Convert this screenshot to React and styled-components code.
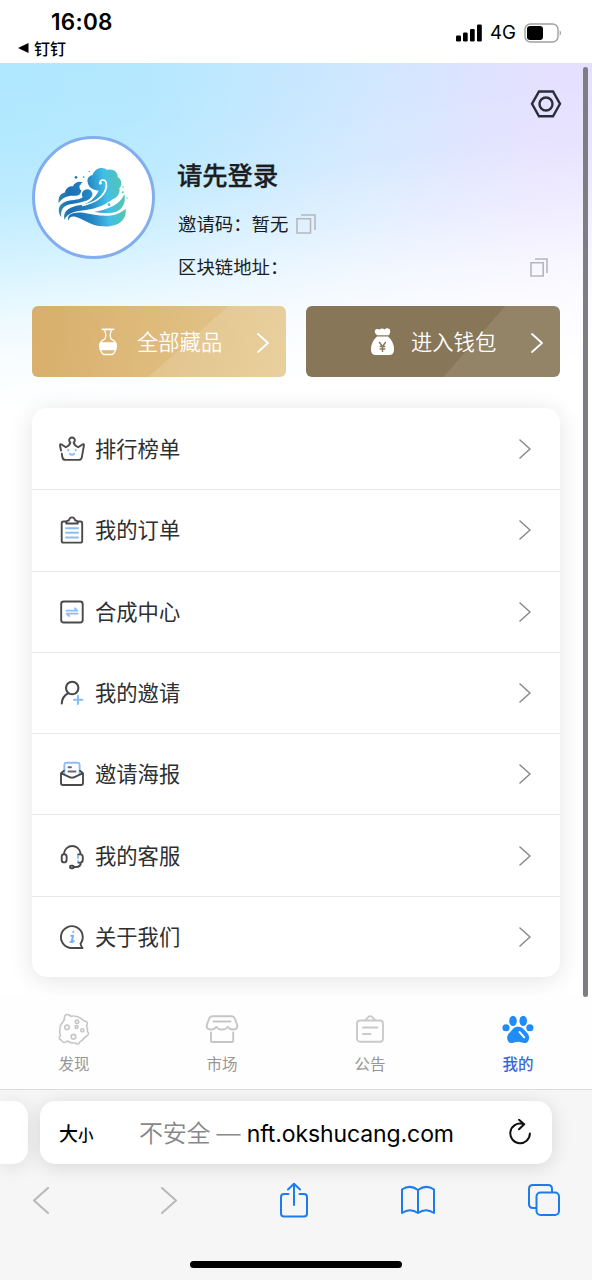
import styled, { createGlobalStyle } from "styled-components";

const GlobalStyle = createGlobalStyle`
  * {
    box-sizing: border-box;
  }
  body {
    margin: 0;
    background: #fff;
    font-family: Inter, "Noto Sans CJK SC", sans-serif;
  }
  svg {
    display: block;
    flex: none;
  }
`;

const Screen = styled.div`
  position: relative;
  display: flex;
  flex-direction: column;
  width: 592px;
  height: 1280px;
  overflow: hidden;
`;

const StatusBar = styled.header`
  display: flex;
  justify-content: space-between;
  height: 63px;
  padding: 9px 30px 0 18px;
`;
const Clock = styled.div`
  padding-left: 33px;
  font-size: 22.5px;
  font-weight: 600;
  line-height: 26px;
  letter-spacing: 0.3px;
`;
const BackTo = styled.div`
  display: flex;
  align-items: center;
  gap: 5px;
  height: 25px;
  font-size: 16px;
  font-weight: 500;
`;
const Signals = styled.div`
  display: flex;
  align-items: center;
  gap: 8px;
  height: 47px;
  font-size: 18.7px;
`;

const Page = styled.main`
  height: 932px;
  padding: 24px 32px 0;
  background: linear-gradient(
      175deg,
      rgba(255, 255, 255, 0) 0,
      rgba(255, 255, 255, 0.03) 70px,
      rgba(255, 255, 255, 0.14) 130px,
      rgba(255, 255, 255, 0.42) 190px,
      rgba(255, 255, 255, 0.72) 245px,
      rgba(255, 255, 255, 0.9) 290px,
      #fff 350px
    ),
    linear-gradient(95deg, #b0e8ff 0, #b4e8ff 150px, #d0e7ff 370px, #e4dfff 540px);
`;
const Settings = styled.div`
  display: flex;
  justify-content: flex-end;
  height: 49px;
  padding: 1px 0 0;
  margin-right: -2px;
`;
const Profile = styled.section`
  display: flex;
  height: 170px;
`;
const Avatar = styled.div`
  display: flex;
  align-items: center;
  justify-content: center;
  width: 123px;
  height: 123px;
  border: 3px solid #82aef0;
  border-radius: 50%;
  background: #fff;
`;
const Info = styled.div`
  flex: 1;
  padding: 20px 12px 0 22px;
  color: #1b1d20;
`;
const Name = styled.h1`
  margin: 0;
  font-size: 25.3px;
  font-weight: 500;
  line-height: 40px;
  -webkit-text-stroke: 0.3px;
`;
const InfoLine = styled.div`
  display: flex;
  align-items: center;
  justify-content: ${props => (props.$spread ? "space-between" : "flex-start")};
  gap: 8px;
  height: 43px;
  margin-top: ${props => (props.$spread ? 0 : "5px")};
  padding-left: 1px;
  font-size: 18.4px;
  svg {
    margin-top: ${props => (props.$spread ? "4px" : "2px")};
  }
`;

const Actions = styled.section`
  display: flex;
  gap: 20px;
  margin-bottom: 31px;
`;
const Action = styled.button`
  display: flex;
  align-items: center;
  width: 254px;
  height: 71px;
  padding: 0 17px 0 62px;
  border: 0;
  border-radius: 6px;
  background: ${props => props.$fill};
  color: #fff;
  font-family: inherit;
  font-size: 21.3px;
  font-weight: 350;
  svg:last-child {
    margin-top: 2px;
  }
`;
const ActionLabel = styled.span`
  flex: 1;
  margin-left: 15px;
  padding-bottom: 3px;
  text-align: left;
`;

const Menu = styled.ul`
  margin: 0;
  padding: 0;
  border-radius: 15px;
  background: #fff;
  box-shadow: 0 3px 24px rgba(0, 0, 0, 0.11);
  list-style: none;
`;
const MenuItem = styled.li`
  display: flex;
  align-items: center;
  height: 81.3px;
  padding: 0 29px 0 25px;
  color: #2d2f32;
  font-size: 21.3px;
  & + & {
    border-top: 1px solid #e9e9e9;
  }
`;
const MenuLabel = styled.span`
  flex: 1;
  margin-left: 8px;
  padding-bottom: 3px;
`;

const TabBar = styled.nav`
  position: relative;
  display: flex;
  height: 95px;
  border-bottom: 1px solid #dcdcdc;
  background: #fefefe;
`;
const Tab = styled.a`
  display: flex;
  flex: 1;
  flex-direction: column;
  align-items: center;
  padding-top: 17px;
  color: ${props => (props.$active ? "#3a66dc" : "#979797")};
  font-size: 15.5px;
  font-weight: ${props => (props.$active ? 500 : 400)};
  line-height: 24px;
  svg {
    margin-bottom: 7px;
  }
`;

const Browser = styled.footer`
  height: 190px;
  background: #f6f6f6;
  overflow: hidden;
`;
const Pills = styled.div`
  display: flex;
  gap: 12px;
  padding-top: 11px;
`;
const PrevPill = styled.div`
  width: 28px;
  height: 63px;
  border-radius: 0 15px 15px 0;
  background: #fff;
  box-shadow: 0 3px 20px rgba(0, 0, 0, 0.1);
`;
const Address = styled.div`
  display: flex;
  align-items: center;
  width: 512px;
  height: 63px;
  padding: 0 20px 0 19px;
  border-radius: 15px;
  background: #fff;
  box-shadow: 0 3px 20px rgba(0, 0, 0, 0.13);
`;
const TextSize = styled.div`
  width: 80px;
  font-size: 19px;
  font-weight: 500;
  small {
    font-size: 15.5px;
  }
`;
const Url = styled.div`
  flex: 1;
  padding-bottom: 2px;
  font-size: 23px;
  white-space: nowrap;
  letter-spacing: -0.1px;
`;
const Insecure = styled.span`
  color: #88888b;
  font-size: 24px;
  font-weight: 350;
  letter-spacing: -0.3px;
`;
const Toolbar = styled.div`
  display: grid;
  grid-template-columns: 128px 124px 124px 126px;
  align-items: center;
  justify-items: start;
  height: 72px;
  padding-left: 33px;
  grid-template-columns: 128px 118px 121px 127px 34px;
`;
const HomeIndicator = styled.div`
  width: 212px;
  height: 7px;
  margin: 25px auto 0;
  border-radius: 4px;
  background: #000;
`;
const Scrollbar = styled.div`
  position: absolute;
  top: 67px;
  right: 4px;
  width: 5px;
  height: 930px;
  border-radius: 3px;
  background: #7d7d83;
`;

function Icon({ w = 26, h = 28, color = "#4a4a4c", stroke = 1.9, children }) {
  return (
    <svg
      width={w}
      height={h}
      viewBox={`0 0 ${w} ${h}`}
      fill="none"
      stroke={color}
      strokeWidth={stroke}
      strokeLinecap="round"
      strokeLinejoin="round"
    >
      {children}
    </svg>
  );
}

const BLUE = "#8fbcf5";

function Chevron({ w = 12, h = 20, color = "#8c8c8c", stroke = 1.6, left }) {
  return (
    <Icon w={w} h={h} color={color} stroke={stroke}>
      <path
        d={
          left
            ? `M${w - 1} 1L1 ${h / 2}L${w - 1} ${h - 1}`
            : `M1 1L${w - 1} ${h / 2}L1 ${h - 1}`
        }
      />
    </Icon>
  );
}

function Copy({ w = 20, h = 20, split = 14.5 }) {
  return (
    <svg
      width={w}
      height={h}
      viewBox={`0 0 ${w} ${h}`}
      fill="none"
      stroke="#b4b8bd"
      strokeWidth="1.6"
    >
      <path d={`M1 4.8H${split}V${h - 1}H1z`} />
      <path d={`M5 1H${w - 1}V${h - 4}`} />
    </svg>
  );
}

function Logo() {
  return (
    <svg width="75" height="64" viewBox="108 118 225 192">
      <defs>
        <linearGradient
          id="sea"
          gradientUnits="userSpaceOnUse"
          x1="116"
          y1="230"
          x2="322"
          y2="205"
        >
          <stop offset="0" stopColor="#2b8aa8" />
          <stop offset="0.16" stopColor="#1b6fb5" />
          <stop offset="0.45" stopColor="#2386c4" />
          <stop offset="0.7" stopColor="#42bfe6" />
          <stop offset="1" stopColor="#58c6a4" />
        </linearGradient>
      </defs>
      <g fill="url(#sea)">
        <path d="M116 229C114 209 122 200 134 198C138 184 148 177 159 179C164 167 176 163 189 167C177 172 175 184 184 192C181 205 174 209 158 207C140 207 127 214 116 229z" />
        <path d="M124 272C111 253 114 233 136 225C153 218 171 223 188 212C182 199 190 188 202 188C215 189 221 201 215 210C204 226 177 227 150 233C128 239 121 250 124 272z" />
        <path d="M206 176C198 161 203 147 218 145C222 125 248 117 262 130C280 125 294 137 293 151C308 160 306 177 298 185C302 200 290 215 278 218C260 233 230 246 198 250C165 254 142 258 134 279C126 256 148 240 178 236C208 232 226 213 236 192C224 191 211 186 206 176z" />
        <path d="M222 256C263 249 300 235 313 203C319 228 308 247 289 255C270 262 243 258 222 256z" />
        <path d="M146 283C138 263 159 255 190 258C231 265 282 279 317 246C321 283 292 301 250 299C209 297 190 276 166 270C152 268 146 274 146 283z" />
        <circle cx="168" cy="152" r="4" />
        <circle cx="191" cy="151" r="2.5" />
        <circle cx="208" cy="134" r="2" />
        <circle cx="181" cy="172" r="2" />
        <circle cx="309" cy="181" r="2.5" />
        <circle cx="308" cy="197" r="3" />
        <circle cx="321" cy="214" r="2" />
      </g>
      <path
        d="M241 170C237 158 257 155 259 171C262 190 247 209 232 219C217 229 202 233 188 236"
        fill="none"
        stroke="#fff"
        strokeWidth="5"
        strokeLinecap="round"
      />
      <circle cx="241" cy="169" r="4.5" fill="#fff" />
      <g fill="#fff">
        <circle cx="266" cy="234" r="7" />
        <circle cx="283" cy="221" r="5" />
        <circle cx="298" cy="214" r="4" />
      </g>
      <circle cx="267" cy="234" r="4" fill="#42bfe6" />
    </svg>
  );
}

const menu = [
  {
    label: "排行榜单",
    icon: (
      <Icon w={30}>
        <path d="M4 15.5L3 10.2Q3 8.8 4.3 9.3L8.8 12.2Q12.6 10.8 13.4 7.6A2.8 2.8 0 1 1 16.6 7.6Q17.4 10.8 21.2 12.2L25.8 9.3Q27 8.8 27 10.2L24.8 22.3Q24.3 24.9 21.7 24.9H8.3Q5.9 24.9 5.4 22.3L4.8 18.8" />
        <path
          d="M11.3 14.6V15.4M18.7 14.6V15.4M12.7 18.7Q15 20.8 17.3 18.7"
          stroke={BLUE}
        />
      </Icon>
    )
  },
  {
    label: "我的订单",
    icon: (
      <Icon w={30}>
        <path d="M9 5.5H6.5Q4.7 5.5 4.7 7.3V25Q4.7 26.6 6.5 26.6H23.5Q25.2 26.6 25.2 25V7.3Q25.2 5.5 23.5 5.5H21M9.3 7.5V6.2Q9.5 4.7 12 4.2Q12.5 1.4 15 1.4T18 4.2Q20.5 4.7 20.7 6.2V7.5z" />
        <path d="M9 12.2H21M9 16.8H21M9 21.5H21" stroke={BLUE} />
      </Icon>
    )
  },
  {
    label: "合成中心",
    icon: (
      <Icon w={30}>
        <rect x="4.2" y="3.5" width="21.5" height="21" rx="2.5" />
        <path
          d="M9.3 12.6H20.5L17.8 10.2M20.7 15.6H9.5L12.2 18"
          stroke={BLUE}
          strokeWidth="1.7"
        />
      </Icon>
    )
  },
  {
    label: "我的邀请",
    icon: (
      <Icon w={30} stroke={2.1}>
        <circle cx="15.2" cy="9" r="6.2" />
        <path d="M11.2 14.3Q5.2 17.3 4.8 24.5" />
        <path d="M21 16.8V25M17 20.8H25.2" stroke="#86bdf8" />
      </Icon>
    )
  },
  {
    label: "邀请海报",
    icon: (
      <Icon w={30}>
        <path
          d="M7.4 14V4.8Q7.4 2.7 9.4 2.7H20.6Q22.6 2.7 22.6 4.8V14"
          stroke={BLUE}
        />
        <path d="M7 10.8L4 13.2V23Q4 25 6 25H24Q26 25 26 23V13.2L23 10.8M4 13.2L12 16.8Q15 18.4 18 16.8L26 13.2" />
        <path d="M11.5 7.3H14M11.5 11.5H18.5" stroke="#66686d" />
      </Icon>
    )
  },
  {
    label: "我的客服",
    icon: (
      <Icon w={30}>
        <rect x="4.7" y="12.2" width="4.9" height="8.2" rx="2.4" />
        <path d="M7 12V11.4A8.3 8.3 0 0 1 23.5 11.4V12M21 12.6Q25.8 11.4 25.8 15V17.6Q25.8 20.6 23.5 20.6H21.3M23.9 20.6Q23.7 25 19 25H16.5" />
        <rect x="13" y="23.8" width="3.7" height="2.4" rx="1" />
        <path d="M21 14V16M21 19V19.4" stroke={BLUE} />
      </Icon>
    )
  },
  {
    label: "关于我们",
    icon: (
      <Icon w={30}>
        <path d="M25.5 25H14.7A10.9 10.9 0 1 1 23.5 20.7Q24 23.5 25.5 25z" />
        <path
          d="M16.3 8.8V9.1M14.3 12.8H16L14.7 18.8Q15.6 19.3 16.8 18.1M13.5 19.1H14.5"
          stroke="#78b0f8"
          strokeWidth="2"
        />
      </Icon>
    )
  }
];

const tabs = [
  {
    label: "发现",
    icon: (
      <Icon w={34} h={34} color="#c6c6c6" stroke={1.6}>
        <path d="M7.5 5.5Q8 1.8 11 2.6Q13 3 13.5 4.3Q20.5 3 24.8 7.2L27.5 9Q30.5 9 30.3 11.8L29.5 14.5Q31 16.5 30.3 19.5Q32.8 21.5 30.3 23.5Q27 25.5 25 28.5Q22.5 29.5 21.8 31.5Q20 33 18.3 31Q13.5 31.3 10.2 29Q7.5 31.8 5.3 29.5Q4.8 28 3.5 27.8Q1 26.2 3.4 24Q1.8 18 3.8 12.5Q7.3 9.5 7.5 5.5z" />
        <circle cx="10" cy="15.3" r="2.3" />
        <circle cx="20" cy="9.7" r="1.7" />
        <circle cx="19.5" cy="15" r="1.4" />
        <circle cx="25.3" cy="18.3" r="1.6" />
        <circle cx="16.5" cy="24.7" r="2.3" />
      </Icon>
    )
  },
  {
    label: "市场",
    icon: (
      <Icon w={34} h={34} color="#c6c6c6" stroke={1.9}>
        <path d="M7 4.2H27Q29 4.2 30 7L32.2 13Q32.8 17.5 28.5 17.5Q25.5 18 22.5 15Q20 18 17 17.5Q14 18 11.5 15Q8.5 18 5.5 17.5Q1.2 17.5 1.8 13L4 7Q5 4.2 7 4.2zM8.5 9.5H25.5M6 20.5V29Q6 30 7 30H27Q28.2 30 28.2 29V20.5" />
      </Icon>
    )
  },
  {
    label: "公告",
    icon: (
      <Icon w={34} h={34} color="#cacaca" stroke={1.9}>
        <rect x="4" y="8.5" width="26" height="21.2" rx="3" />
        <path d="M12.5 8L15 5.3Q17.2 3 19.4 5.3L22 8M10 15.5H24.5M10 22H17.5" />
      </Icon>
    )
  },
  {
    label: "我的",
    active: true,
    icon: (
      <svg width="34" height="34" viewBox="0 0 34 34" fill="#208cf7">
        <ellipse cx="12" cy="8.9" rx="3.8" ry="5.2" />
        <ellipse cx="22.2" cy="8.9" rx="3.8" ry="5.2" />
        <ellipse cx="5" cy="15.7" rx="3.6" ry="3.5" />
        <ellipse cx="28.9" cy="15.7" rx="3.6" ry="3.5" />
        <path d="M17 14.7C21 14.7 22.5 17 25 19.7C28.3 22.7 28.6 25.3 27.6 28.3C26.5 31.3 23 31.8 20 30.3C18 29.5 16 29.5 14 30.3C11 31.8 7.7 31.3 6.6 28.3C5.5 24.8 6.5 22.2 9.5 19.7C12 17 13 14.7 17 14.7z" />
        <path
          d="M18.5 20L23.3 25.3"
          stroke="#fff"
          strokeWidth="1.9"
          strokeLinecap="round"
        />
      </svg>
    )
  }
];

function App() {
  return (
    <Screen>
      <GlobalStyle />
      <StatusBar>
        <div>
          <Clock>16:08</Clock>
          <BackTo>
            <svg width="11" height="10" viewBox="0 0 11 10">
              <path d="M10.5 0V10L0 5z" />
            </svg>
            钉钉
          </BackTo>
        </div>
        <Signals>
          <svg width="26" height="18" viewBox="0 0 26 18">
            <rect x="0" y="11.5" width="5" height="6" rx="1.3" />
            <rect x="7" y="8.5" width="4.7" height="9" rx="1.3" />
            <rect x="14" y="5" width="4.7" height="12.5" rx="1.3" />
            <rect x="21" y="0.5" width="4.8" height="17" rx="1.3" />
          </svg>
          <span>4G</span>
          <svg width="38" height="20" viewBox="0 0 38 20">
            <rect
              x="1"
              y="1"
              width="33"
              height="18"
              rx="5.5"
              fill="none"
              stroke="#a0a0a0"
              strokeWidth="1.4"
            />
            <rect x="3" y="3" width="16" height="14" rx="3.2" />
            <path d="M35.7 7Q38.4 10 35.7 13z" fill="#a0a0a0" />
          </svg>
        </Signals>
      </StatusBar>

      <Page>
        <Settings>
          <Icon w={32} h={32} color="#2a2e38" stroke={2.4}>
            <path
              d="M9 3.5H23L30 15.8L23 28.3H9L2 15.8z"
              strokeLinejoin="miter"
            />
            <circle cx="16" cy="16" r="6.5" />
          </Icon>
        </Settings>
        <Profile>
          <Avatar>
            <Logo />
          </Avatar>
          <Info>
            <Name>请先登录</Name>
            <InfoLine>
              邀请码：暂无
              <Copy />
            </InfoLine>
            <InfoLine $spread>
              区块链地址：
              <Copy w={18} h={19} split={13.2} />
            </InfoLine>
          </Info>
        </Profile>

        <Actions>
          <Action $fill="linear-gradient(138.4deg, transparent 58.7%, rgba(255,255,255,.13) 58.9%), linear-gradient(100deg, #d8ae6b, #e5c98f)">
            <Icon w={28} h={30} color="#fff" stroke={1.3}>
              <path d="M8.5 2.3H19.5" strokeWidth="1.8" />
              <path d="M10.5 2.8Q12.8 8 11 11.8Q5.8 14 5.8 19.5Q6 24.5 9.5 27.5H18.5Q22 24.5 22.2 19.5Q22.2 14 17 11.8Q15.2 8 17.5 2.8" />
              <path
                d="M6.3 16H21.7Q23 19.5 21.5 22.6H6.5Q5 19.5 6.3 16z"
                fill="#fff"
              />
            </Icon>
            <ActionLabel>全部藏品</ActionLabel>
            <Chevron color="#fff" stroke={1.8} />
          </Action>
          <Action $fill="linear-gradient(131.1deg, transparent 63%, rgba(255,255,255,.1) 63.2%), #877657">
            <svg width="28" height="30" viewBox="0 0 28 30" fill="#fff">
              <path d="M7 3.2Q8.5 1 11.5 2.6Q14 .4 16.5 2.4Q19 .4 21.7 2.3Q23.2 5.5 20.8 8.2H9.2Q6 6 7 3.2z" />
              <path d="M9 9.5H20Q26 14.5 26 22.5Q26 28 21 28H8Q3 28 3 22.5Q3 14.5 9 9.5z" />
              <path
                d="M11.2 15L14.5 19.5L17.8 15M14.5 19.5V25M11.7 19.5H17.3M11.7 22H17.3"
                fill="none"
                stroke="#877657"
                strokeWidth="1.4"
              />
            </svg>
            <ActionLabel>进入钱包</ActionLabel>
            <Chevron color="#fff" stroke={1.8} />
          </Action>
        </Actions>

        <Menu>
          {menu.map(item => (
            <MenuItem key={item.label}>
              {item.icon}
              <MenuLabel>{item.label}</MenuLabel>
              <Chevron />
            </MenuItem>
          ))}
        </Menu>
      </Page>

      <TabBar>
        {tabs.map(tab => (
          <Tab key={tab.label} $active={tab.active}>
            {tab.icon}
            {tab.label}
          </Tab>
        ))}
      </TabBar>

      <Browser>
        <Pills>
          <PrevPill />
          <Address>
            <TextSize>
              大<small>小</small>
            </TextSize>
            <Url>
              <Insecure>不安全 — </Insecure>
              nft.okshucang.com
            </Url>
            <Icon w={24} h={28} color="#111" stroke={2}>
              <path d="M14.5 4.9A9.8 9.8 0 1 0 21.9 14.6M11 .8L16.2 5.3L11 10.3" />
            </Icon>
          </Address>
        </Pills>
        <Toolbar>
          <Chevron w={16} h={27} left color="#bababa" stroke={2.2} />
          <Chevron w={16} h={27} color="#bababa" stroke={2.2} />
          <Icon w={30} h={36} color="#1c7cec" stroke={2}>
            <path d="M9.5 12H5Q2 12 2 15V31.5Q2 34.5 5 34.5H25Q28 34.5 28 31.5V15Q28 12 25 12H20.5M15 23V2M9 7.5L15 1.7L21 7.5" />
          </Icon>
          <Icon w={36} h={30} color="#1c7cec" stroke={2}>
            <path d="M18 5Q10-1 2 4.5V28Q10 22.5 18 28Q26 22.5 34 28V4.5Q26-1 18 5zV28" />
          </Icon>
          <Icon w={34} h={34} color="#1c7cec" stroke={2}>
            <path d="M9 25H6Q2 25 2 21V6Q2 2 6 2H21Q25 2 25 6V9" />
            <rect x="9.5" y="9.5" width="22.5" height="22.5" rx="4" />
          </Icon>
        </Toolbar>
        <HomeIndicator />
      </Browser>
      <Scrollbar />
    </Screen>
  );
}

export default App;
